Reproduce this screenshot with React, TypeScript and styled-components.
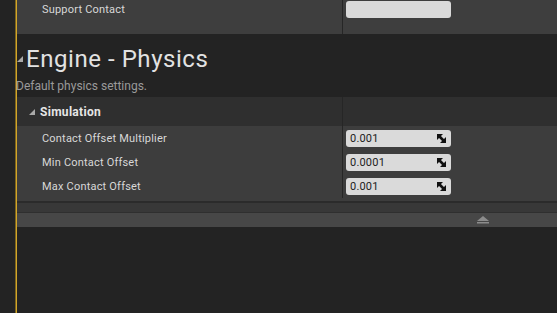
import React from "react";
import styled, { createGlobalStyle } from "styled-components";

const Global = createGlobalStyle`
  html, body { margin: 0; padding: 0; background: #232323; }
  body { font-family: Roboto, "Noto Sans", sans-serif; overflow: hidden; }
`;

const Page = styled.div`
  display: flex;
  width: 557px;
  height: 313px;
  background: #232323;
`;

const Gutter = styled.div`
  width: 15px;
  flex: none;
`;

const AccentLine = styled.div`
  width: 2px;
  flex: none;
  background: linear-gradient(to right, #7d6520 0 50%, #d3a629 50% 100%);
`;

const Panel = styled.div`
  flex: 1;
  display: flex;
  flex-direction: column;
  min-width: 0;
`;

const Row = styled.div<{ $h: number; $bg: string; $top?: number }>`
  display: grid;
  grid-template-columns: 325px 1px 1fr;
  height: ${(p) => p.$h}px;
  background: ${(p) => p.$bg};
  align-items: ${(p) => (p.$top !== undefined ? "start" : "center")};
`;

const NameCell = styled.div<{ $indent: number; $top?: number }>`
  padding-left: ${(p) => p.$indent}px;
  padding-top: ${(p) => p.$top ?? 0}px;
  font-size: 11px;
  letter-spacing: 0.2px;
  color: #d8d8d8;
  white-space: nowrap;
  display: flex;
  align-items: center;
  gap: 5px;
`;

const Divider = styled.div`
  align-self: stretch;
  background: #262626;
`;

const ValueCell = styled.div<{ $top?: number }>`
  padding-left: 3px;
  padding-top: ${(p) => p.$top ?? 0}px;
`;

const Field = styled.div`
  width: 105px;
  height: 17px;
  box-sizing: border-box;
  background: #dadada;
  border-radius: 3px;
  display: flex;
  align-items: center;
  justify-content: space-between;
  padding: 0 5px 0 4px;
  font-size: 11px;
  letter-spacing: 0.2px;
  color: #1c1c1c;
`;

const TitleBlock = styled.div`
  height: 63px;
  display: flex;
  flex-direction: column;
  box-sizing: border-box;
  padding-top: 9px;
`;

const TitleLine = styled.div`
  display: flex;
  align-items: center;
  height: 32px;
`;

const Title = styled.div`
  font-size: 24px;
  color: #e2e2e2;
  margin-left: 3px;
  letter-spacing: 0.55px;
`;

const Description = styled.div`
  font-size: 12px;
  color: #9a9a9a;
  margin-top: 4px;
  margin-left: -1px;
`;

const CategoryName = styled.span`
  font-size: 12px;
  font-weight: bold;
  letter-spacing: 0.3px;
  color: #e6e6e6;
`;

const Rows = styled.div`
  background: #3d3d3d;
  padding-bottom: 3px;
  display: flex;
  flex-direction: column;
`;

const Shadow = styled.div`
  height: 2px;
  background: #2b2b2b;
`;

const Spacer = styled.div`
  height: 9px;
  background: #383838;
  border-bottom: 1px solid #2f2f2f;
`;

const FooterBar = styled.div`
  height: 14px;
  background: #474747;
  display: flex;
  align-items: center;
  padding-left: 460px;
`;

const Expander = ({ size = 6 }: { size?: number }) => (
  <svg width={size} height={size} viewBox="0 0 6 6">
    <polygon points="6,0 6,6 0,6" fill="#a9a9a9" />
  </svg>
);

const Spinner = () => (
  <svg width="9" height="9" viewBox="0 0 9 9">
    <polygon points="0,0 6,0 0,6" fill="#111" />
    <polygon points="9,9 3,9 9,3" fill="#111" />
    <line x1="1.5" y1="1.5" x2="7.5" y2="7.5" stroke="#111" strokeWidth="2.6" />
  </svg>
);

const Eject = () => (
  <svg width="12" height="8" viewBox="0 0 12 8">
    <polygon points="6,0 12,5 0,5" fill="#8c8c8c" />
    <rect x="0" y="6" width="12" height="1.5" fill="#8c8c8c" />
  </svg>
);

const props = [
  { name: "Contact Offset Multiplier", value: "0.001" },
  { name: "Min Contact Offset", value: "0.0001" },
  { name: "Max Contact Offset", value: "0.001" },
];

export default function App() {
  return (
    <>
      <Global />
      <Page>
        <Gutter />
        <AccentLine />
        <Panel>
          <Row $h={34} $bg="#3e3e3e" $top={0}>
            <NameCell $indent={25} $top={3}>Support Contact</NameCell>
            <Divider />
            <ValueCell $top={1}>
              <Field />
            </ValueCell>
          </Row>
          <TitleBlock>
            <TitleLine>
              <Expander />
              <Title>Engine - Physics</Title>
            </TitleLine>
            <Description>Default physics settings.</Description>
          </TitleBlock>
          <Row $h={29} $bg="#2f2f2f">
            <NameCell $indent={12}>
              <Expander />
              <CategoryName>Simulation</CategoryName>
            </NameCell>
            <Divider />
            <div />
          </Row>
          <Rows>
            {props.map((p) => (
              <Row key={p.name} $h={24} $bg="transparent">
                <NameCell $indent={25}>{p.name}</NameCell>
                <Divider />
                <ValueCell>
                  <Field>
                    <span>{p.value}</span>
                    <Spinner />
                  </Field>
                </ValueCell>
              </Row>
            ))}
          </Rows>
          <Shadow />
          <Spacer />
          <FooterBar>
            <Eject />
          </FooterBar>
        </Panel>
      </Page>
    </>
  );
}
